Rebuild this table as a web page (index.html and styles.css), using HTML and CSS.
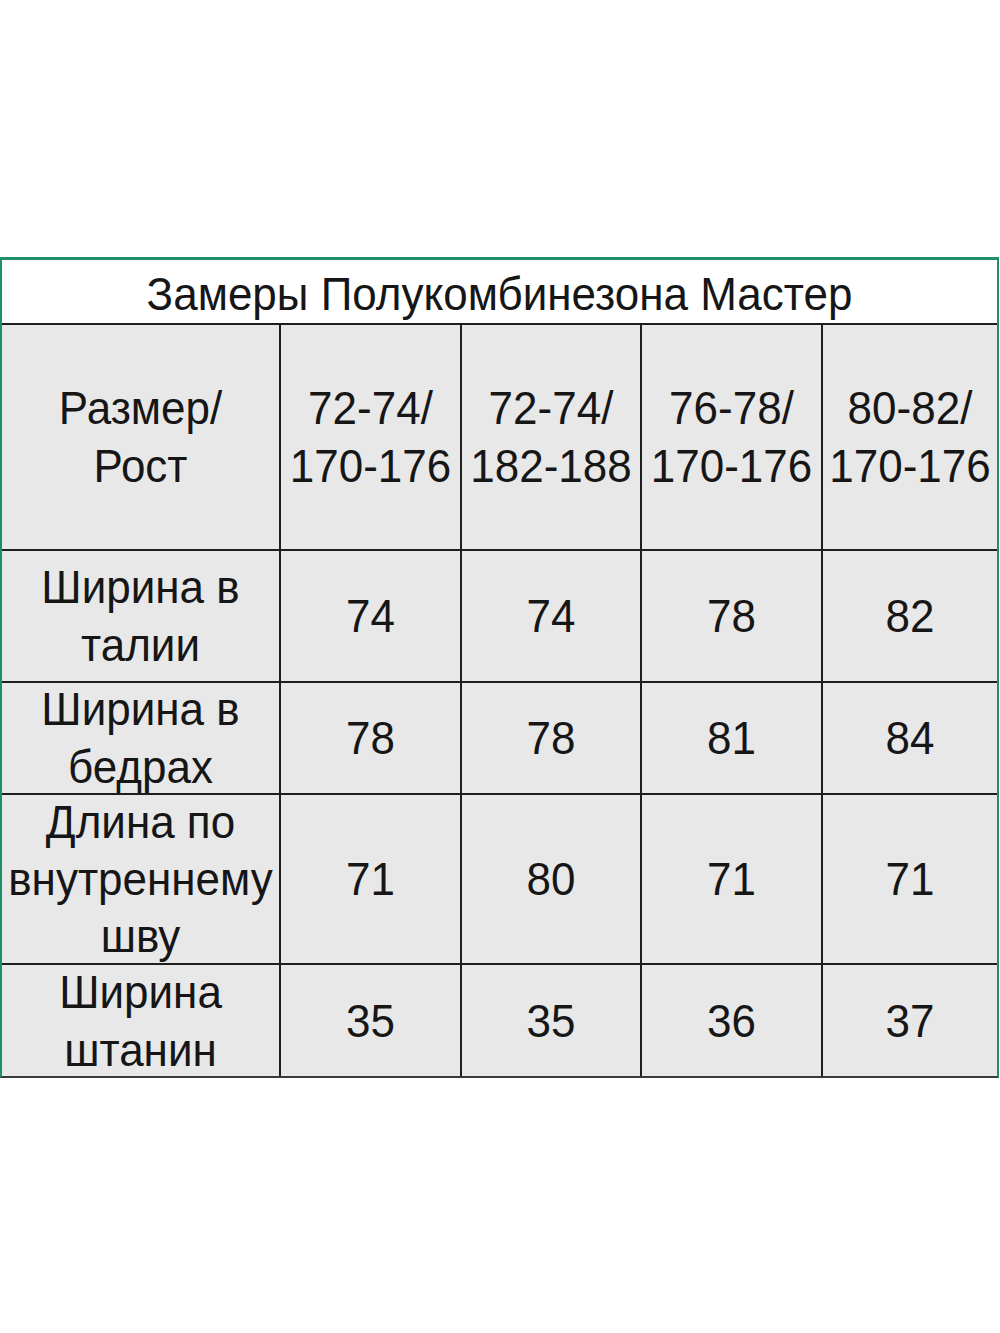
FILE: index.html
```html
<!DOCTYPE html>
<html lang="ru">
<head>
<meta charset="utf-8">
<title>Замеры Полукомбинезона Мастер</title>
<link rel="stylesheet" href="styles.css">
</head>
<body>
<div class="page">
  <div class="sheet">
    <div class="title"><span class="txt">Замеры Полукомбинезона Мастер</span></div>
    <div class="grid">
      <div class="cell"><span class="txt">Размер/<br>Рост</span></div>
      <div class="cell"><span class="txt">72-74/<br>170-176</span></div>
      <div class="cell"><span class="txt">72-74/<br>182-188</span></div>
      <div class="cell"><span class="txt">76-78/<br>170-176</span></div>
      <div class="cell"><span class="txt">80-82/<br>170-176</span></div>

      <div class="cell"><span class="txt">Ширина в<br>талии</span></div>
      <div class="cell"><span class="txt">74</span></div>
      <div class="cell"><span class="txt">74</span></div>
      <div class="cell"><span class="txt">78</span></div>
      <div class="cell"><span class="txt">82</span></div>

      <div class="cell"><span class="txt">Ширина в<br>бедрах</span></div>
      <div class="cell"><span class="txt">78</span></div>
      <div class="cell"><span class="txt">78</span></div>
      <div class="cell"><span class="txt">81</span></div>
      <div class="cell"><span class="txt">84</span></div>

      <div class="cell"><span class="txt">Длина по<br>внутреннему<br>шву</span></div>
      <div class="cell"><span class="txt">71</span></div>
      <div class="cell"><span class="txt">80</span></div>
      <div class="cell"><span class="txt">71</span></div>
      <div class="cell"><span class="txt">71</span></div>

      <div class="cell"><span class="txt">Ширина<br>штанин</span></div>
      <div class="cell"><span class="txt">35</span></div>
      <div class="cell"><span class="txt">35</span></div>
      <div class="cell"><span class="txt">36</span></div>
      <div class="cell"><span class="txt">37</span></div>
    </div>
  </div>
</div>
</body>
</html>
```

FILE: styles.css
```css
html, body {
  margin: 0;
  padding: 0;
  background: #ffffff;
}

.page {
  width: 1000px;
  height: 1333px;
  padding-top: 257px;
  box-sizing: border-box;
  font-family: "Liberation Sans", Arial, sans-serif;
  color: #161616;
}

.sheet {
  width: 999px;
  box-sizing: border-box;
  border-top: 3px solid #1f8f6a;
  border-left: 2px solid #1f8f6a;
  border-right: 2px solid #1f8f6a;
  border-bottom: 2px solid #3a3a3a;
  background: #1e1e1e;
}

.title {
  height: 65px;
  background: #ffffff;
  display: flex;
  align-items: center;
  justify-content: center;
  font-size: 44px;
  line-height: 50px;
  padding-top: 5px;
  box-sizing: border-box;
  border-bottom: 2px solid #1e1e1e;
}

.grid {
  display: grid;
  grid-template-columns: 277px 179px 178px 179px 174px;
  grid-template-rows: 224px 130px 110px 168px 111px;
  gap: 2px;
  background: #1e1e1e;
}

.cell {
  background: #e8e8e8;
  display: flex;
  align-items: center;
  justify-content: center;
  text-align: center;
  font-size: 44px;
  line-height: 54px;
  white-space: nowrap;
}

.txt {
  display: inline-block;
  transform: scaleY(1.06);
}
```
